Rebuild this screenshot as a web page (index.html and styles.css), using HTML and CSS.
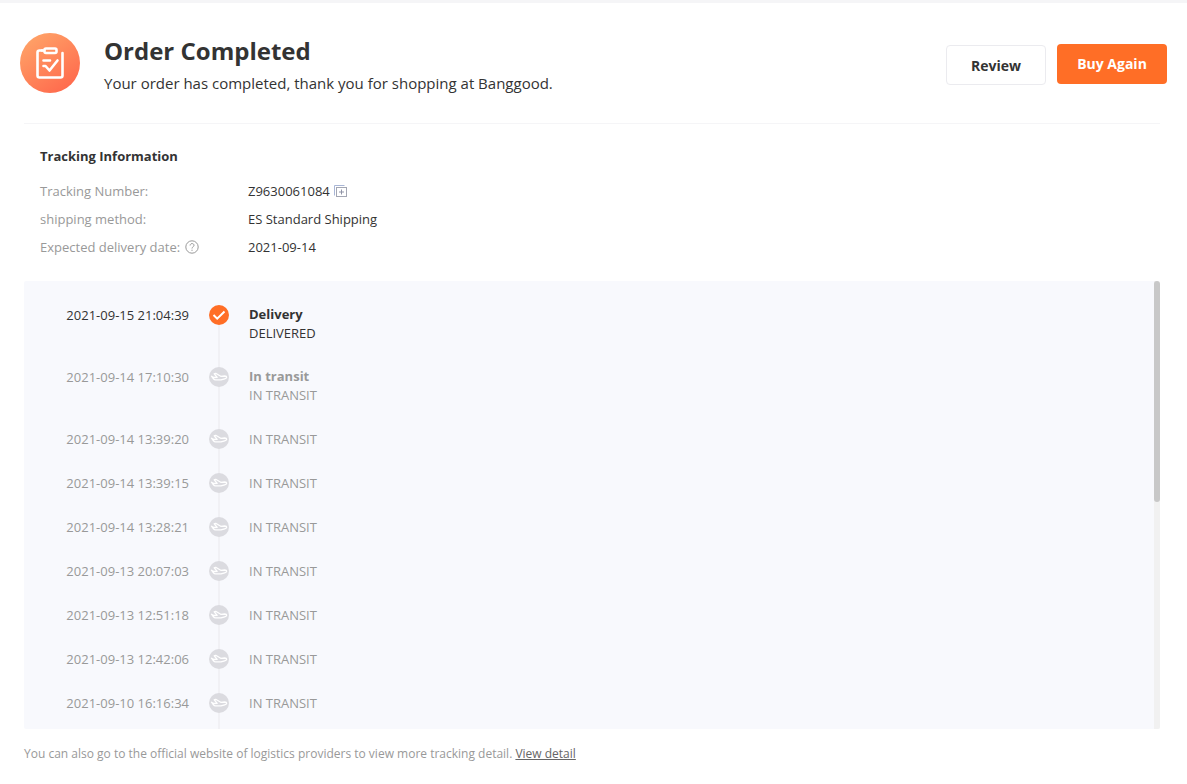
FILE: index.html
```html
<!DOCTYPE html>
<html lang="en">
<head>
<meta charset="utf-8">
<meta name="viewport" content="width=device-width, initial-scale=1">
<title>Order Completed</title>
<link rel="stylesheet" href="styles.css">
</head>
<body>
<svg class="defs" width="0" height="0" aria-hidden="true">
  <symbol id="plane" viewBox="0 0 20 20">
    <circle cx="10" cy="10" r="10" fill="#dbdbe0"/>
    <path d="M2.500 9.200l2.300 1.300 3.400-.2L5.200 6.800l1.500-.5 5 3 4-.3c1.300 0 2 .5 2 1.200s-.7 1.200-2 1.600l-3.700 1.100H6.500c-1 0-1.500-.3-2-1z" fill="none" stroke="#fff" stroke-width="1.300" stroke-linejoin="round"/>
  </symbol>
</svg>

<header class="order-head">
  <svg class="order-icon" viewBox="0 0 60 60" aria-hidden="true">
    <defs>
      <linearGradient id="warm" x1="0.2" y1="0.1" x2="0.8" y2="0.95">
        <stop offset="0" stop-color="#ff9f66"/>
        <stop offset="1" stop-color="#ff6a4d"/>
      </linearGradient>
    </defs>
    <circle cx="30" cy="30" r="30" fill="url(#warm)"/>
    <g fill="none" stroke="#fff" stroke-width="2.600" stroke-linecap="round" stroke-linejoin="round">
      <path d="M22 17.500h-2.500a2 2 0 0 0-2 2v23a2 2 0 0 0 2 2h21a2 2 0 0 0 2-2V20"/>
      <rect x="24.500" y="15.500" width="12" height="4.500" rx="1.500"/>
      <path d="M22 17.500h2M23.500 27.500h6.500M23.500 33h2l4 4.500 8-10"/>
    </g>
  </svg>
  <div class="order-text">
    <h1>Order Completed</h1>
    <p>Your order has completed, thank you for shopping at Banggood.</p>
  </div>
  <div class="order-actions">
    <button type="button" class="btn btn-plain">Review</button>
    <button type="button" class="btn btn-main">Buy Again</button>
  </div>
</header>

<main class="tracking">
  <section class="info">
    <h2>Tracking Information</h2>
    <dl>
      <dt>Tracking Number:</dt>
      <dd>Z9630061084
        <button type="button" class="icon-btn" aria-label="Copy">
          <svg width="13" height="13" viewBox="0 0 13 13"><path d="M.5 10.500V.5h10" fill="none" stroke="#a9b6d6"/><rect x="2.500" y="2.500" width="10" height="9" fill="none" stroke="#a3a6b3"/><path d="M7.500 4.500v5M5 7h5" stroke="#8f93a6"/></svg>
        </button>
      </dd>
      <dt>shipping method:</dt>
      <dd>ES Standard Shipping</dd>
      <dt>Expected delivery date:
        <button type="button" class="icon-btn" aria-label="Help">
          <svg width="14" height="14" viewBox="0 0 14 14" fill="none" stroke="#999"><circle cx="7" cy="7" r="6.200"/><path d="M5.100 5.500c0-2.600 3.900-2.500 3.900-.2C9 6.800 7 6.800 7 8.500M7 9.700v1.200"/></svg>
        </button>
      </dt>
      <dd>2021-09-14</dd>
    </dl>
  </section>

  <section class="panel">
    <ol class="timeline">
      <li class="done">
        <time>2021-09-15 21:04:39</time>
        <svg class="dot" viewBox="0 0 20 20"><circle cx="10" cy="10" r="10" fill="#ff6e26"/><path d="M4.500 10l3.700 3.700 7.300-7.200" fill="none" stroke="#fff" stroke-width="2"/></svg>
        <div class="state"><strong>Delivery</strong><span>DELIVERED</span></div>
      </li>
      <li>
        <time>2021-09-14 17:10:30</time>
        <svg class="dot"><use href="#plane"/></svg>
        <div class="state"><strong>In transit</strong><span>IN TRANSIT</span></div>
      </li>
      <li><time>2021-09-14 13:39:20</time><svg class="dot"><use href="#plane"/></svg><div class="state">IN TRANSIT</div></li>
      <li><time>2021-09-14 13:39:15</time><svg class="dot"><use href="#plane"/></svg><div class="state">IN TRANSIT</div></li>
      <li><time>2021-09-14 13:28:21</time><svg class="dot"><use href="#plane"/></svg><div class="state">IN TRANSIT</div></li>
      <li><time>2021-09-13 20:07:03</time><svg class="dot"><use href="#plane"/></svg><div class="state">IN TRANSIT</div></li>
      <li><time>2021-09-13 12:51:18</time><svg class="dot"><use href="#plane"/></svg><div class="state">IN TRANSIT</div></li>
      <li><time>2021-09-13 12:42:06</time><svg class="dot"><use href="#plane"/></svg><div class="state">IN TRANSIT</div></li>
      <li><time>2021-09-10 16:16:34</time><svg class="dot"><use href="#plane"/></svg><div class="state">IN TRANSIT</div></li>
    </ol>
    <div class="scroll-track"><div class="scroll-thumb"></div></div>
  </section>

  <p class="note">You can also go to the official website of logistics providers to view more tracking detail. <a href="#">View detail</a></p>
</main>
</body>
</html>
```
FILE: styles.css
```css
* {
  box-sizing: border-box;
}

body {
  margin: 0;
  border-top: 3px solid #f5f5f7;
  background: #fff;
  color: #333;
  font: 13px/20px "Open Sans", "Noto Sans", sans-serif;
}

h1, h2, p, dl, dd, ol {
  margin: 0;
  padding: 0;
}

button {
  font-family: inherit;
  cursor: pointer;
}

.defs {
  position: absolute;
}

/* header */
.order-head {
  display: flex;
  align-items: flex-start;
  padding: 30px 20px 26px;
}

.order-icon {
  flex: none;
  width: 60px;
  height: 60px;
  margin-right: 24px;
}

.order-text {
  flex: 1;
}

.order-text h1 {
  font-size: 24px;
  line-height: 36px;
  font-weight: 700;
}

.order-text p {
  font-size: 15px;
  line-height: 28px;
}

.order-actions {
  display: flex;
  gap: 11px;
  padding-top: 11px;
}

.btn {
  height: 40px;
  padding: 0 20px 2px;
  border: 0;
  border-radius: 4px;
  font-size: 14px;
  font-weight: 700;
}

.btn-plain {
  width: 100px;
  margin-top: 1px;
  padding-bottom: 0;
  border: 1px solid #ebebef;
  background: #fff;
  color: #333;
}

.btn-main {
  width: 110px;
  background: #ff6e26;
  color: #fff;
}

/* tracking */
.tracking {
  margin: 0 27px 0 24px;
}

.info {
  padding: 22px 16px 20px;
  border-top: 1px solid #f5f5f7;
}

.info h2 {
  margin-bottom: 11px;
  font-size: 13px;
  font-weight: 700;
}

.info dl {
  display: grid;
  grid-template-columns: 208px 1fr;
  line-height: 28px;
}

.info dt {
  color: #999;
}

.icon-btn {
  display: inline-flex;
  margin-left: 1px;
  padding: 0;
  border: 0;
  background: none;
  vertical-align: -2px;
}

.panel {
  display: flex;
  height: 448px;
  overflow: hidden;
  border-radius: 2px;
  background: #f8f9fd;
}

.timeline {
  flex: 1;
  padding-top: 24px;
  list-style: none;
}

.timeline li {
  display: grid;
  grid-template-columns: 165px 20px 1fr;
  column-gap: 20px;
  padding-bottom: 24px;
  background: linear-gradient(#f1f1f5, #f1f1f5) 194px 0 / 2px 100% no-repeat;
  color: #999;
}

.timeline time {
  text-align: right;
}

.timeline .done {
  background-position: 194px 20px;
  color: #333;
}

.dot {
  width: 20px;
  height: 20px;
}

.state strong,
.state span {
  display: block;
  line-height: 19px;
}

.state strong {
  font-weight: 700;
}

.scroll-track {
  width: 6px;
  background: #f1f1f1;
}

.scroll-thumb {
  height: 221px;
  border-radius: 3px;
  background: #c8c8c8;
}

.note {
  margin-top: 15px;
  color: #999;
  font-size: 12px;
}

.note a {
  color: #666;
}
```
